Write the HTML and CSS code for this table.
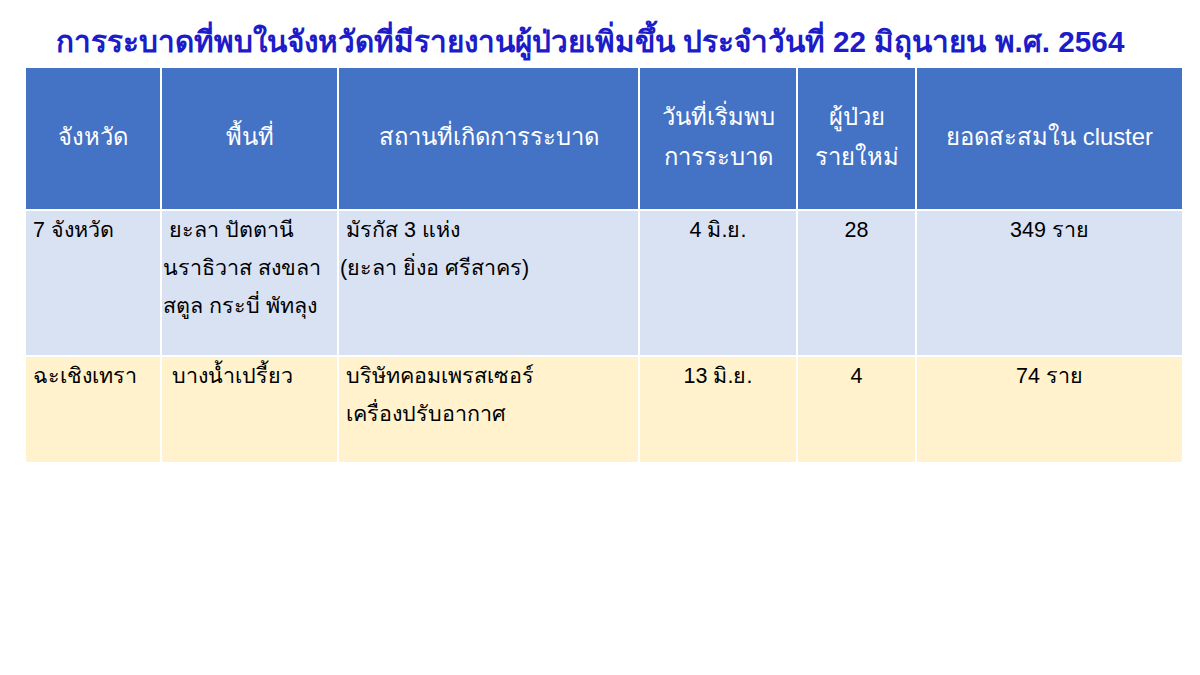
FILE: index.html
```html
<!DOCTYPE html>
<html lang="th">
<head>
<meta charset="utf-8">
<link rel="stylesheet" href="styles.css">
</head>
<body>
<div class="page">
  <h1 class="title">การระบาดที่พบในจังหวัดที่มีรายงานผู้ป่วยเพิ่มขึ้น ประจำวันที่ 22 มิถุนายน พ.ศ. 2564</h1>
  <table class="grid">
    <colgroup>
      <col class="c1"><col class="c2"><col class="c3"><col class="c4"><col class="c5"><col class="c6">
    </colgroup>
    <thead>
      <tr>
        <th>จังหวัด</th>
        <th>พื้นที่</th>
        <th>สถานที่เกิดการระบาด</th>
        <th>วันที่เริ่มพบ<br>การระบาด</th>
        <th>ผู้ป่วย<br>รายใหม่</th>
        <th>ยอดสะสมใน cluster</th>
      </tr>
    </thead>
    <tbody>
      <tr class="r1">
        <td class="pad">7 จังหวัด</td>
        <td class="tight">&nbsp;ยะลา ปัตตานี<br>นราธิวาส สงขลา<br>สตูล กระบี่ พัทลุง</td>
        <td class="tight">&nbsp;มัรกัส 3 แห่ง<br>(ยะลา ยิ่งอ ศรีสาคร)</td>
        <td class="mid">4 มิ.ย.</td>
        <td class="mid">28</td>
        <td class="mid">349 ราย</td>
      </tr>
      <tr class="r2">
        <td class="pad">ฉะเชิงเทรา</td>
        <td class="pad2">บางน้ำเปรี้ยว</td>
        <td class="pad">บริษัทคอมเพรสเซอร์<br>เครื่องปรับอากาศ</td>
        <td class="mid">13 มิ.ย.</td>
        <td class="mid">4</td>
        <td class="mid">74 ราย</td>
      </tr>
    </tbody>
  </table>
</div>
</body>
</html>
```

FILE: styles.css
```css
html, body {
  margin: 0;
  padding: 0;
  background: #ffffff;
}
body {
  font-family: "Liberation Sans", "Noto Sans", "DejaVu Sans", sans-serif;
  width: 1200px;
  height: 675px;
  overflow: hidden;
}
.page {
  padding: 21px 0 0 25px;
}
.title {
  margin: 0 0 3px 0;
  width: 1130px;
  text-align: center;
  font-size: 29.7px;
  line-height: 42px;
  font-weight: bold;
  color: #1c1cc8;
  white-space: nowrap;
}
.grid {
  border-collapse: collapse;
  table-layout: fixed;
  width: 1158px;
  margin-left: -1px;
}
.c1 { width: 136px; }
.c2 { width: 177px; }
.c3 { width: 301px; }
.c4 { width: 158px; }
.c5 { width: 119px; }
.c6 { width: 267px; }
.grid th, .grid td {
  border: 2px solid #ffffff;
}
.grid th {
  background: #4472c4;
  color: #ffffff;
  font-weight: normal;
  font-size: 23.8px;
  line-height: 40px;
  height: 137px;
  padding: 0 0 4px 0;
  text-align: center;
  vertical-align: middle;
}
.grid td {
  font-size: 21.5px;
  line-height: 38px;
  color: #000000;
  vertical-align: top;
  padding: 0 4px 0 4px;
}
.r1 td {
  background: #d9e2f3;
  height: 144px;
}
.r2 td {
  background: #fff2cc;
  height: 105px;
}
.grid td.pad { padding-left: 7px; }
.grid td.pad2 { padding-left: 10px; }
.grid td.tight { padding-left: 1px; }
.grid td.mid { text-align: center; }
```
